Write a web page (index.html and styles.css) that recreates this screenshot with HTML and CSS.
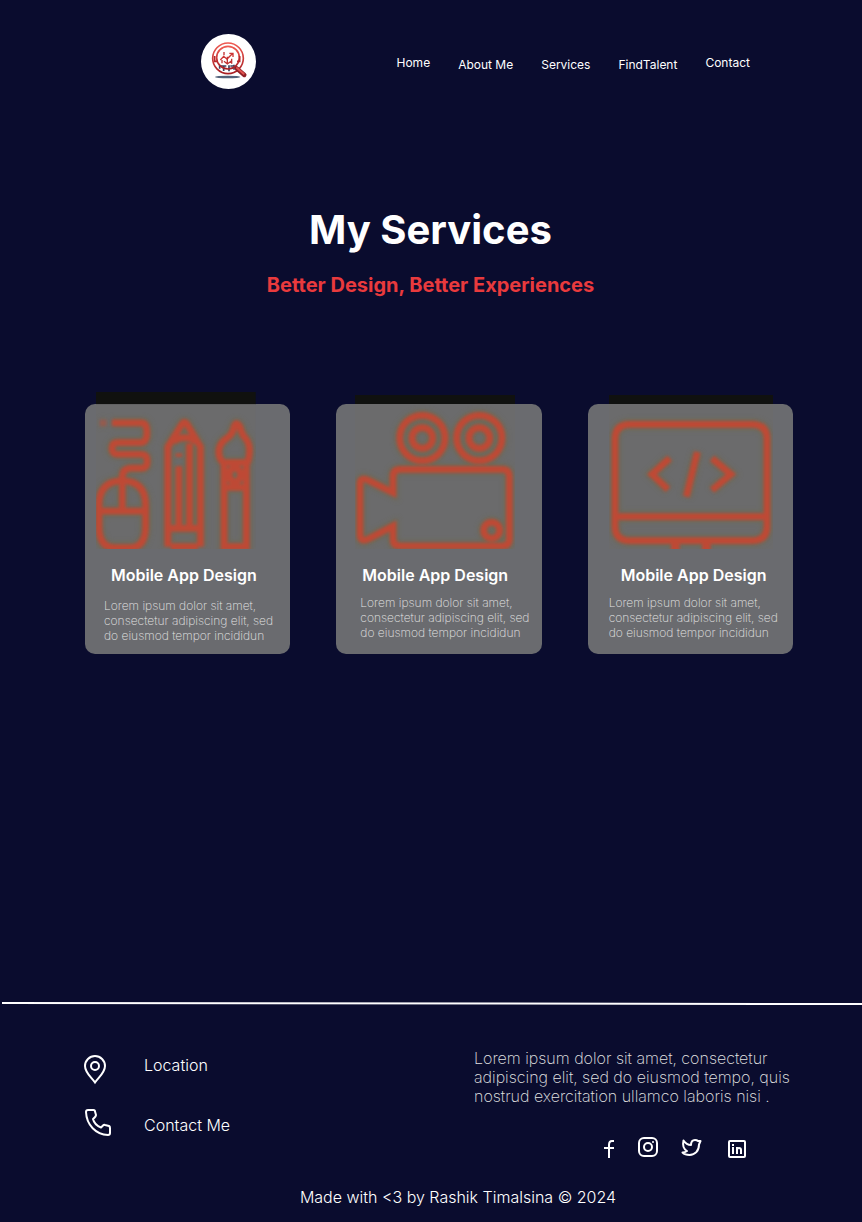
FILE: index.html
```html
<!DOCTYPE html>
<html lang="en">
<head>
<meta charset="utf-8">
<meta name="viewport" content="width=device-width, initial-scale=1">
<title>My Services</title>
<link rel="stylesheet" href="styles.css">
</head>
<body>
<header class="header">
  <a class="logo" href="#" aria-label="Home page">
    <svg viewBox="0 0 165 165" fill="none">
      <defs>
        <linearGradient id="ring" x1="0" y1="0" x2="0" y2="1"><stop offset="0" stop-color="#ef5a52"/><stop offset="1" stop-color="#a81f24"/></linearGradient>
      </defs>
      <circle cx="82.500" cy="82.500" r="82.500" fill="#fff"/>
      <ellipse cx="80" cy="129" rx="38" ry="4" fill="#52627a"/>
      <path d="M56 92V104M68 94V111M84 94V112M99 92V107M55 96H76M88 96H101" stroke="#39405f" stroke-width="5"/>
      <circle cx="81" cy="73" r="46" stroke="url(#ring)" stroke-width="5"/>
      <circle cx="81" cy="71" r="34" stroke="url(#ring)" stroke-width="5"/>
      <path d="M41 66V82H50M116 66V82H108" stroke="#b8282b" stroke-width="5"/>
      <path d="M58 78L68 67L78 75L94 59M85 58H96V69" stroke="#cc3535" stroke-width="4"/>
      <path d="M69 54V64M79 68V88M92 74V89M63 78V88M69 82L79 90L91 81" stroke="#c03232" stroke-width="4"/>
      <path d="M107 103L130 123" stroke="#8f2026" stroke-width="13" stroke-linecap="round"/>
      <path d="M108 102L128 119" stroke="#e25450" stroke-width="6" stroke-linecap="round"/>
    </svg>
  </a>
  <nav class="nav">
    <a class="nav-link nav-link-high" href="#">Home</a>
    <a class="nav-link" href="#">About Me</a>
    <a class="nav-link" href="#">Services</a>
    <a class="nav-link" href="#">FindTalent</a>
    <a class="nav-link nav-link-high" href="#">Contact</a>
  </nav>
</header>

<main class="main">
  <h1 class="title">My Services</h1>
  <p class="subtitle">Better Design, Better Experiences</p>

  <section class="cards">
    <article class="card card-tools">
      <svg class="art" viewBox="64 35 480 472" fill="none">
        <defs>
          <filter id="soft"><feGaussianBlur stdDeviation="4"/></filter>
          <filter id="halo"><feGaussianBlur stdDeviation="8"/></filter>
          <g id="tools">
            <path d="M112 128H200Q217 128 217 157T200 187H130Q112 187 112 205T130 222H200Q218 222 218 243T200 264H168Q143 266 143 292V388"/>
            <path d="M75 128H96" opacity=".5"/>
            <path d="M73 375Q73 302 143 302T213 375V440Q213 503 165 503H121Q73 503 73 440ZM66 393H213"/>
            <path d="M280 500V200L322 132Q330 120 338 132L378 200V500M296 184Q330 160 366 184M313 258V445M345 190V445M280 445H378M290 500H370M313 220V230"/>
            <path d="M449 250Q428 230 435 202Q440 184 460 172Q475 162 479 140Q485 120 497 140Q501 162 515 176Q534 202 519 250M449 247V500H516V247M449 247H516M456 322H511M473 265Q455 283 473 304H490Q508 283 490 265Z"/>
          </g>
        </defs>
        <rect class="art-back" x="64" y="35" width="480" height="37"/>
        <rect class="art-pane" x="64" y="72" width="480" height="435"/>
        <use class="art-halo" href="#tools"/>
        <use class="art-line" href="#tools"/>
      </svg>
      <h2 class="card-title">Mobile App Design</h2>
      <p class="card-text">Lorem ipsum dolor sit amet, consectetur adipiscing elit, sed do eiusmod tempor incididun</p>
    </article>

    <article class="card card-film">
      <svg class="art" viewBox="90 45 480 462" fill="none">
        <defs>
          <g id="film">
            <circle cx="292" cy="174" r="68"/><circle cx="292" cy="174" r="31"/>
            <circle cx="463" cy="174" r="68"/><circle cx="463" cy="174" r="31"/>
            <path d="M204 290Q204 268 226 268H532Q553 268 553 290V478Q553 498 532 498H226Q204 498 204 478V438L132 476Q105 490 105 462V312Q105 290 128 300L204 338Z"/>
            <circle cx="500" cy="451" r="24"/>
          </g>
        </defs>
        <rect class="art-back" x="90" y="45" width="480" height="27"/>
        <rect class="art-pane" x="90" y="72" width="480" height="435"/>
        <use class="art-halo" href="#film"/>
        <use class="art-line" href="#film"/>
      </svg>
      <h2 class="card-title">Mobile App Design</h2>
      <p class="card-text">Lorem ipsum dolor sit amet, consectetur adipiscing elit, sed do eiusmod tempor incididun</p>
    </article>

    <article class="card card-code">
      <svg class="art" viewBox="93 45 492 462" fill="none">
        <defs>
          <g id="code">
            <path d="M111 178Q111 133 156 133H522Q567 133 567 178V438Q567 482 522 482H156Q111 482 111 438ZM111 410H567"/>
            <path d="M292 482V520M385 482V520" stroke-width="26"/>
            <path d="M275 235L222 283L270 328M358 216L325 350M402 235L459 283L402 330"/>
          </g>
        </defs>
        <rect class="art-back" x="93" y="45" width="492" height="27"/>
        <rect class="art-pane" x="93" y="72" width="492" height="435"/>
        <use class="art-halo" href="#code"/>
        <use class="art-line" href="#code"/>
      </svg>
      <h2 class="card-title">Mobile App Design</h2>
      <p class="card-text">Lorem ipsum dolor sit amet, consectetur adipiscing elit, sed do eiusmod tempor incididun</p>
    </article>
  </section>
</main>

<footer class="footer">
  <svg class="rule" viewBox="0 0 862 4" preserveAspectRatio="none"><path d="M2 1L862 2" stroke="#fff" stroke-width="2"/></svg>
  <div class="footer-row">
    <div class="contacts">
      <a class="contact" href="#">
        <svg class="contact-icon" viewBox="0 0 28 30" fill="none" stroke="#fff" stroke-width="2"><path d="M11 27.500C8 23 1 18 1 11A10 10 0 0 1 21 11C21 18 14 23 11 27.500Z"/><circle cx="11" cy="11" r="4"/></svg>
        <span>Location</span>
      </a>
      <a class="contact contact-phone" href="#">
        <svg class="contact-icon" viewBox="0 0 28 30" fill="none" stroke="#fff" stroke-width="2" stroke-linejoin="round"><path d="M4 2H9.500Q11 2 11 3.500L12 7Q12 8.500 9 11C10 15 13 18 17 19.500L19 17.500Q20 16.500 21 17L25 18Q26 18.500 26 20V25Q26 27 24 27C12 26.500 2.500 17 2 4Q2 2 4 2Z"/></svg>
        <span>Contact Me</span>
      </a>
    </div>
    <div class="about">
      <p class="about-text">Lorem ipsum dolor sit amet, consectetur adipiscing elit, sed do eiusmod tempo, quis nostrud exercitation ullamco laboris nisi .</p>
      <div class="socials">
        <a class="social" href="#" aria-label="Facebook"><svg viewBox="0 0 22 22" fill="none" stroke="#fff" stroke-width="2"><path d="M17 21V8Q17 4 20 4H22M12 11H22"/></svg></a>
        <a class="social" href="#" aria-label="Instagram"><svg viewBox="0 0 22 22" fill="none" stroke="#fff" stroke-width="2"><rect x="3" y="1" width="18" height="18" rx="5"/><circle cx="12" cy="10" r="4"/><circle cx="17" cy="5" r="1" fill="#fff" stroke="none"/></svg></a>
        <a class="social" href="#" aria-label="Twitter"><svg viewBox="0 0 22 22" fill="none" stroke="#fff" stroke-width="2" stroke-linejoin="round"><path d="M2.500 15.500Q5 15.500 7 14C3.500 12 2.500 8 3.500 3.500C5.500 6.500 8 8 11 8C11 5 12.500 3 15 3Q17 3 18 4H20.500L19 7.500C19 14 15 18 9.500 18Q5 18 2.500 15.500Z"/></svg></a>
        <a class="social" href="#" aria-label="LinkedIn"><svg viewBox="0 0 22 22" fill="none" stroke="#fff" stroke-width="2"><rect x="5" y="4" width="16" height="16" rx="1"/><path d="M9 10V17M9 7V9M13 10V17M13 13Q13 11 15 11T17 13V17"/></svg></a>
      </div>
    </div>
  </div>
  <p class="credit">Made with &lt;3 by Rashik Timalsina © 2024</p>
</footer>
</body>
</html>
```
FILE: styles.css
```css
* { box-sizing: border-box; }

body {
  margin: 0;
  min-height: 100vh;
  display: flex;
  flex-direction: column;
  background: #0a0c2e;
  color: #fff;
  font-family: Inter, "Liberation Sans", sans-serif;
}

h1, h2, p { margin: 0; }
a { color: inherit; text-decoration: none; }
svg { display: block; }

.header {
  display: flex;
  justify-content: space-between;
  align-items: center;
  padding: 34px 13% 0 201px;
}
.logo svg { width: 55px; height: 55px; }
.nav {
  display: flex;
  align-items: flex-end;
  gap: 28px;
  padding-top: 4px;
  height: 22px;
}
.nav-link { font-size: 12px; line-height: 16px; }
.nav-link-high { align-self: flex-start; }

.main { flex: 1; padding: 117px 69px 0 85px; }
.title {
  margin-right: 17px;
  text-align: center;
  font-size: 40px;
  line-height: 48px;
  font-weight: 700;
}
.subtitle {
  margin: 19px 17px 0 0;
  text-align: center;
  font-size: 20px;
  line-height: 24px;
  font-weight: 700;
  color: #e93a3d;
}

.cards {
  display: grid;
  grid-template-columns: repeat(3, 1fr);
  gap: 46px;
  margin-top: 107px;
}
.card {
  min-height: 250px;
  padding-bottom: 11px;
  border-radius: 10px;
  background: #6a6b6f;
}
.art { height: 154px; margin-top: -9px; }
.card-tools .art { height: 157px; margin: -12px 0 0 11px; }
.card-film .art { margin-left: 19px; }
.card-code .art { margin-left: 21px; }
.art-back { fill: #10110f; }
.art-pane { fill: #6b6b6c; }
.art-halo { stroke: #6e6740; stroke-width: 32px; opacity: .5; filter: url(#halo); }
.art-line { stroke: #be4a35; stroke-width: 20px; filter: url(#soft); }

.card-title {
  margin-top: 16px;
  padding-left: 26px;
  font-size: 16px;
  line-height: 20px;
  font-weight: 600;
}
.card-text {
  margin-top: 10px;
  padding-left: 24px;
  font-size: 12px;
  line-height: 15px;
  font-weight: 200;
  color: #e4e4e4;
}
.card-tools .card-text { margin-top: 13px; padding-left: 19px; }
.card-code .card-title { padding-left: 33px; }
.card-code .card-text { padding-left: 21px; }

.rule { width: 100%; height: 4px; }
.footer-row {
  display: flex;
  justify-content: space-between;
  padding: 43px 68px 0 84px;
}
.contacts { display: grid; gap: 20px; align-content: start; }
.contact {
  display: flex;
  gap: 32px;
  height: 40px;
  font-size: 16px;
  line-height: 32px;
  font-weight: 300;
}
.contact-icon { width: 28px; height: 30px; margin-top: 6px; }
.contact-phone .contact-icon { margin-top: -1px; }
.about { width: 320px; }
.about-text {
  font-size: 16px;
  line-height: 19px;
  font-weight: 200;
  color: #e4e4e4;
}
.socials {
  display: flex;
  gap: 22px;
  margin: 31px 0 0 118px;
}
.social svg { width: 22px; height: 22px; }
.credit {
  padding: 28px 0 15px 54px;
  text-align: center;
  font-size: 16px;
  line-height: 20px;
  font-weight: 300;
}
```
